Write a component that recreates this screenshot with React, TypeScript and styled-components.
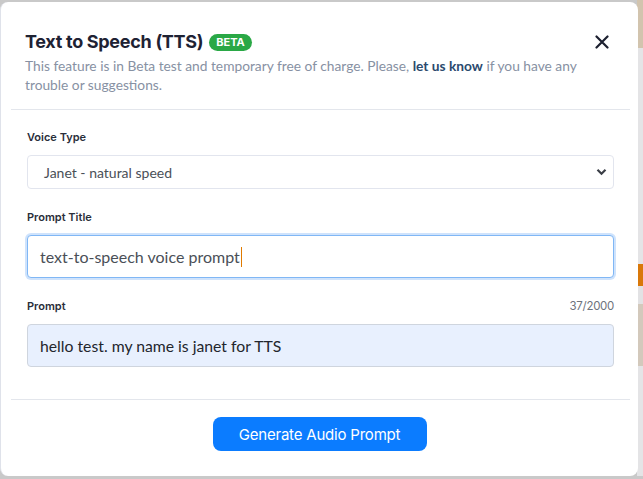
import styled, { createGlobalStyle } from 'styled-components';

const GlobalStyle = createGlobalStyle`
  html, body {
    margin: 0;
    padding: 0;
  }
  body {
    width: 643px;
    height: 479px;
    overflow: hidden;
    font-family: Lato, "Open Sans", sans-serif;
  }
`;

const App = () => {
  return (
    <>
      <GlobalStyle />
      <Backdrop>
        <Modal>
          <Header>
            <TitleRow>
              <Title>
                Text to Speech (TTS)
                <Badge>BETA</Badge>
              </Title>
              <CloseButton aria-label="Close">
                <svg width="14" height="14" viewBox="0 0 14 14">
                  <path d="M1.5 1.5 L12.5 12.5 M12.5 1.5 L1.5 12.5" stroke="#1c2030" strokeWidth="2.2" strokeLinecap="round" />
                </svg>
              </CloseButton>
            </TitleRow>
            <Subtitle>
              This feature is in Beta test and temporary free of charge. Please, <a href="#">let us know</a> if you
              have any trouble or suggestions.
            </Subtitle>
          </Header>

          <Divider />

          <Body>
            <Field>
              <Label>Voice Type</Label>
              <SelectBox>
                <span>Janet - natural speed</span>
                <svg width="11" height="8" viewBox="0 0 11 8">
                  <path d="M1.5 1.8 L5.5 5.8 L9.5 1.8" fill="none" stroke="#3b3f47" strokeWidth="2.2" />
                </svg>
              </SelectBox>
            </Field>

            <Field>
              <Label>Prompt Title</Label>
              <TextBox focused>
                text-to-speech voice prompt
                <Caret />
              </TextBox>
            </Field>

            <Field>
              <LabelRow>
                <Label>Prompt</Label>
                <Counter>37/2000</Counter>
              </LabelRow>
              <TextBox filled>hello test. my name is janet for TTS</TextBox>
            </Field>
          </Body>

          <Divider />

          <Footer>
            <PrimaryButton type="button">Generate Audio Prompt</PrimaryButton>
          </Footer>
        </Modal>
      </Backdrop>
    </>
  );
};

export default App;

// dimmed page peeking out on the right of the dialog
const Backdrop = styled.div`
  width: 643px;
  height: 479px;
  box-sizing: border-box;
  padding-top: 2px;
  background:
    linear-gradient(
      to bottom,
      #d2c4ae 0px,
      #d2c4ae 48px,
      #e4e4e6 48px,
      #e4e4e6 264px,
      #d9780a 264px,
      #d9780a 286px,
      #e2e2e4 286px,
      #e2e2e4 304px,
      #d3c9bc 304px,
      #d3c9bc 366px,
      #e4e4e6 366px,
      #e4e4e6 476px,
      #c9c9c9 476px
    )
    right top / 6px 100% no-repeat,
    #c9c9c9;
`;

const Modal = styled.div`
  width: 638px;
  height: 474px;
  box-sizing: border-box;
  background: #fff;
  border-radius: 8px;
  border-left: 1px solid #dfe2ea;
  display: flex;
  flex-direction: column;
`;

const Header = styled.div`
  padding: 28px 29px 15px 24px;
`;

const TitleRow = styled.div`
  display: flex;
  align-items: center;
  justify-content: space-between;
`;

const Title = styled.h2`
  margin: 0;
  display: flex;
  align-items: center;
  gap: 6px;
  font-family: Inter, "Noto Sans", sans-serif;
  font-size: 18px;
  line-height: 24px;
  font-weight: 700;
  letter-spacing: -0.3px;
  color: #1e2233;
`;

const Badge = styled.span`
  display: inline-block;
  background: #2aa846;
  color: #fff;
  font-family: Inter, "Noto Sans", sans-serif;
  font-size: 11px;
  font-weight: 700;
  line-height: 17px;
  letter-spacing: 0;
  padding: 0 7px;
  border-radius: 9px;
`;

const CloseButton = styled.button`
  border: none;
  background: none;
  padding: 0;
  display: flex;
  cursor: pointer;
`;

const Subtitle = styled.p`
  margin: 2px 0 0;
  font-size: 13.75px;
  line-height: 19px;
  color: #8791a3;

  a {
    color: #2b4a6e;
    font-weight: 700;
    text-decoration: none;
  }
`;

const Divider = styled.hr`
  margin: 0 8px 0 10px;
  border: none;
  border-top: 1px solid #e3e6ec;
`;

const Body = styled.div`
  padding: 19px 24px 32px 26px;
  display: flex;
  flex-direction: column;
  gap: 20px;
`;

const Field = styled.div`
  display: flex;
  flex-direction: column;
`;

const LabelRow = styled.div`
  display: flex;
  justify-content: space-between;
  align-items: center;
`;

const Label = styled.label`
  display: block;
  font-family: Inter, "Noto Sans", sans-serif;
  font-size: 11px;
  line-height: 16px;
  font-weight: 600;
  color: #2a2e3a;
  margin-bottom: 10px;
`;

const Counter = styled.span`
  font-family: Inter, "Noto Sans", sans-serif;
  font-size: 11.5px;
  line-height: 16px;
  color: #6e737c;
  margin-bottom: 10px;
  letter-spacing: -0.3px;
`;

const SelectBox = styled.div`
  height: 34px;
  box-sizing: border-box;
  border: 1px solid #e2e5ee;
  border-radius: 4px;
  padding: 0 6px 0 16px;
  display: flex;
  align-items: center;
  justify-content: space-between;
  font-size: 14px;
  color: #4a4f57;
`;

const TextBox = styled.div<{ focused?: boolean; filled?: boolean }>`
  height: 43px;
  box-sizing: border-box;
  display: flex;
  align-items: center;
  padding: 0 12px;
  border-radius: 4px;
  font-size: ${(p) => (p.filled ? '15.75px' : '16px')};
  color: ${(p) => (p.filled ? '#23262d' : '#4a4f57')};
  background: ${(p) => (p.filled ? '#e8f0fe' : '#fff')};
  border: 1px solid ${(p) => (p.focused ? '#80b7f5' : '#cfd5de')};
  box-shadow: ${(p) => (p.focused ? '0 0 0 2px #cfe3fc' : 'none')};
`;

const Caret = styled.span`
  display: inline-block;
  width: 1px;
  height: 20px;
  background: #e07a00;
  margin-left: 1px;
`;

const Footer = styled.div`
  display: flex;
  justify-content: center;
  padding-top: 17px;
`;

const PrimaryButton = styled.button`
  width: 214px;
  height: 34px;
  border: none;
  border-radius: 8px;
  background: #0b7cff;
  color: #fff;
  font-family: Inter, "Noto Sans", sans-serif;
  font-size: 15px;
  letter-spacing: -0.2px;
  cursor: pointer;
`;
